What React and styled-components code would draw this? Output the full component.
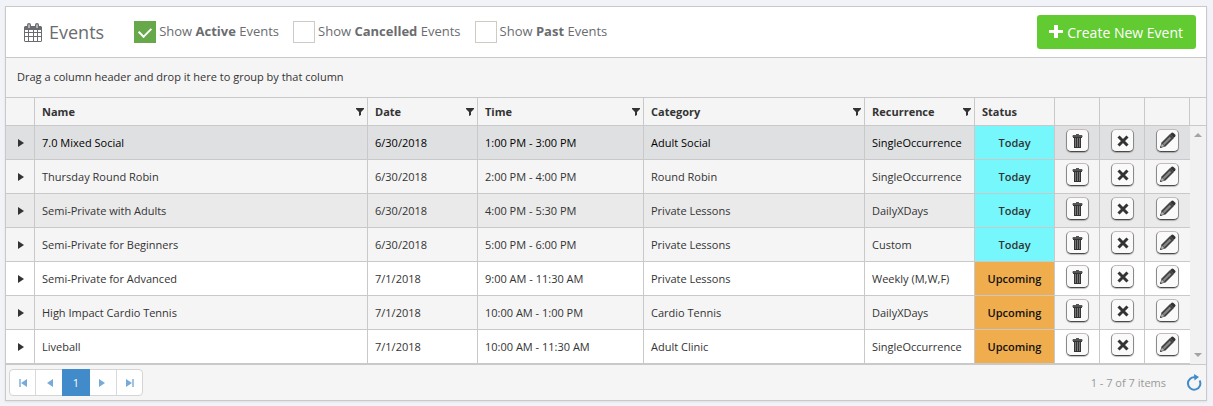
import React, { useState } from 'react';
import styled, { createGlobalStyle } from 'styled-components';

const GlobalStyle = createGlobalStyle`
  * {
    box-sizing: border-box;
  }

  body {
    margin: 0;
    background: #f1f3f8;
    font-family: 'Open Sans', 'Liberation Sans', sans-serif;
    font-size: 11px;
    color: #333;
  }

  button {
    font-family: inherit;
    cursor: pointer;
  }
`;

const Page = styled.main`
  padding: 6px 6px 5px 5px;
`;

const Panel = styled.section`
  border: 1px solid #c9c9c9;
  background: #f5f5f5;
  box-shadow: 0 1px 2px rgba(0, 0, 0, 0.08);
`;

const Toolbar = styled.header`
  display: flex;
  align-items: center;
  height: 51px;
  padding: 0 10px 0 18px;
  background: #fff;
  border-bottom: 1px solid #c9c9c9;
  color: #6a6c6f;
`;

const Title = styled.h1`
  display: flex;
  align-items: center;
  gap: 7px;
  margin: 0 30px 0 0;
  font-size: 18px;
  font-weight: 400;
  line-height: 24px;
`;

const Filters = styled.div`
  display: flex;
  flex: 1;
  gap: 14px;
`;

const FilterLabel = styled.label`
  display: flex;
  gap: 3px;
  font-size: 13px;
  line-height: 20px;
  white-space: nowrap;
`;

const Check = styled.input`
  appearance: none;
  display: grid;
  place-items: center;
  width: 22px;
  height: 22px;
  margin: 0;
  border: 1px solid #cfcbc4;
  background: #fff;

  &:checked {
    border-color: #67a84b;
    background: #67a84b;
  }

  &:checked::after {
    content: '';
    width: 6px;
    height: 10px;
    margin-bottom: 3px;
    border: solid #fff;
    border-width: 0 2px 2px 0;
    transform: rotate(45deg);
  }
`;

const CreateButton = styled.button`
  display: flex;
  align-items: center;
  gap: 4px;
  height: 34px;
  padding: 0 13px 0 12px;
  border: 0;
  border-radius: 3px;
  background: #62cb31;
  color: #fff;
  font-size: 14px;
`;

const GroupBar = styled.div`
  padding: 8px 11px 10px;
  border-bottom: 1px solid #c9c9c9;
  line-height: 21px;
`;

const HeadWrap = styled.div`
  padding-right: 16px;
  border-bottom: 1px solid #c9c9c9;
`;

const BodyWrap = styled.div`
  display: flex;
  border-bottom: 1px solid #c9c9c9;
`;

const Table = styled.table`
  width: 100%;
  table-layout: fixed;
  border-collapse: separate;
  border-spacing: 0;
`;

const Th = styled.th`
  height: 27px;
  padding: 0 3px 0 7px;
  border-right: 1px solid #c9c9c9;
  text-align: left;
  font-weight: 700;
`;

const ThInner = styled.div`
  display: flex;
  align-items: center;
  justify-content: space-between;
`;

const BareButton = styled.button`
  display: grid;
  place-items: center;
  padding: 0;
  border: 0;
  background: none;
  color: #333;
`;

const Row = styled.tr`
  background: ${({ $bg }) => $bg};
  color: ${({ $hovered }) => ($hovered ? '#000' : '#333')};
`;

const Td = styled.td`
  height: 34px;
  padding: 0 0 0 7px;
  border-right: 1px solid #c9c9c9;
  border-bottom: 1px solid #c9c9c9;
  white-space: nowrap;

  &:last-child {
    border-right: 0;
  }
`;

const ExpandCell = styled(Td)`
  padding-left: 11px;
`;

const StatusCell = styled(Td)`
  padding: 0;
  background: ${({ $status }) => ($status === 'Today' ? '#76f7fb' : '#f0ad4e')};
  color: ${({ $status }) => ($status === 'Today' ? '#333' : '#111')};
  font-weight: 600;
  text-align: center;
`;

const ActionCell = styled(Td)`
  padding: 0 0 4px 11px;
`;

const ActionButton = styled.button`
  display: grid;
  place-items: center;
  width: 23px;
  height: 23px;
  padding: 0;
  border: 1px solid;
  border-color: #c4baba #8a8a8a #4a4a4a #8a8a8a;
  border-radius: 5px;
  background: #fafafa;
  box-shadow: 0 1px 1px rgba(0, 0, 0, 0.25);
`;

const Scrollbar = styled.div`
  display: flex;
  flex: none;
  flex-direction: column;
  align-items: center;
  justify-content: space-between;
  width: 16px;
  padding: 7px 0;
  background: #f1f1f1;
`;

const Footer = styled.footer`
  display: flex;
  align-items: center;
  height: 35px;
  padding: 0 4px 0 3px;
`;

const Pager = styled.nav`
  display: flex;
  height: 27px;
  border: 1px solid #d5d5d5;
  border-radius: 4px;
  background: #fff;
`;

const PageButton = styled.button`
  display: grid;
  place-items: center;
  width: 27px;
  padding: 0;
  border: 0;
  border-right: 1px solid #d9d9d9;
  background: none;
  color: #76abd9;

  &:last-child {
    width: 25px;
    border-right: 0;
  }

  &:first-child {
    width: 26px;
  }
`;

const CurrentPage = styled(PageButton)`
  width: 28px;
  margin: -1px 0 -1px -1px;
  border-right: 0;
  background: #428bca;
  color: #fff;
  font-size: 11px;
`;

const Count = styled.span`
  margin-left: auto;
  margin-right: 20px;
  color: #999;
`;

const CalendarIcon = () => (
  <svg width="18" height="19" viewBox="0 0 18 19" aria-hidden="true">
    <path
      fill="#6a6c6f"
      fillRule="evenodd"
      d="M1 3h2V2q0-2 2-2t2 2v1h4V2q0-2 2-2t2 2v1h2l1 1v14l-1 1H1l-1-1V4zM1 7v2h3V7zm4 0v2h4V7zm5 0v2h3V7zm4 0v2h3V7zM1 10v3h3v-3zm4 0v3h4v-3zm5 0v3h3v-3zm4 0v3h3v-3zM1 14v4h3v-4zm4 0v4h4v-4zm5 0v4h3v-4zm4 0v4h3v-4zM4.500 1.500v3.500h1V1.500zm8 0v3.500h1V1.500z"
    />
  </svg>
);

const PlusIcon = () => (
  <svg width="14" height="14" viewBox="0 0 14 14" aria-hidden="true">
    <path fill="#fff" d="M5 0h4v5h5v3H9v5H5V8H0V5h5z" />
  </svg>
);

const FunnelIcon = () => (
  <svg width="8" height="8" viewBox="0 0 8 8" aria-hidden="true">
    <path fill="currentColor" d="M0 0h8v1L5 4v3L3 8V4L0 1z" />
  </svg>
);

const ExpandIcon = () => (
  <svg width="8" height="8" viewBox="0 0 8 8" aria-hidden="true">
    <path fill="currentColor" d="M1 0v8l6-4z" />
  </svg>
);

const TrashIcon = () => (
  <svg width="11" height="14" viewBox="0 0 11 14" aria-hidden="true">
    <path fill="#555" d="M4 0h3v1h3l.500 1v1H.500V2L1 1h3z" />
    <path fill="#777" d="M2 4h7v9H2z" />
    <path fill="none" stroke="#333" d="M2.500 4v9M4.500 4v9M6.500 4v9M8.500 4v9M2 13.500h7M1 3.500h9" />
  </svg>
);

const CrossIcon = () => (
  <svg width="12" height="12" viewBox="0 0 12 12" aria-hidden="true">
    <path stroke="#333" strokeWidth="3" d="M1.500 1.500l9 9M10.500 1.500l-9 9" />
  </svg>
);

const PencilIcon = () => (
  <svg width="17" height="17" viewBox="0 0 17 17" aria-hidden="true">
    <path fill="#444" d="M1 16l1.500-5.500L11 2l4 4-8.500 8.500z" />
    <path fill="#333" d="M11 2.200L12.700.700q.900-.700 1.800.200l1.600 1.600q.900.900.200 1.800L14.800 6z" />
    <path stroke="#888" strokeWidth="2" d="M4.500 12.500l7-7" />
    <path fill="#bbb" d="M1.800 14.900l1-3.200 2.700 2.500z" />
    <path fill="#444" d="M1 16l.600-2 1.400 1.400z" />
  </svg>
);

const ArrowIcon = ({ dir, edge }) => (
  <svg width="10" height="10" viewBox="0 0 10 10" aria-hidden="true">
    <g transform={dir === 'left' ? 'translate(10 0) scale(-1 1)' : undefined}>
      <path fill="currentColor" d="M1 1v8l6-4z" />
      {edge && <path fill="currentColor" opacity="0.7" d="M7 1h2v8H7z" />}
    </g>
  </svg>
);

const ScrollArrow = ({ down }) => (
  <svg width="8" height="4" viewBox="0 0 8 4" aria-hidden="true">
    <path fill="#a3a3a3" d={down ? 'M0 0h8L4 4z' : 'M0 4h8L4 0z'} />
  </svg>
);

const RefreshIcon = () => (
  <svg width="16" height="17" viewBox="0 0 16 17" aria-hidden="true">
    <path fill="none" stroke="#428bca" strokeWidth="2" d="M9 3.300A6.200 6.200 0 1 0 13.600 6.500" />
    <path fill="#428bca" d="M8 0l5 3-4.500 3.500z" />
  </svg>
);

const columns = [
  { title: 'Name', filter: true },
  { title: 'Date', filter: true, width: 110 },
  { title: 'Time', filter: true, width: 166 },
  { title: 'Category', filter: true, width: 221 },
  { title: 'Recurrence', filter: true, width: 110 },
  { title: 'Status', width: 80 },
];

const actions = [
  { label: 'Delete', Icon: TrashIcon },
  { label: 'Cancel', Icon: CrossIcon },
  { label: 'Edit', Icon: PencilIcon },
];

const events = [
  { name: '7.0 Mixed Social', date: '6/30/2018', time: '1:00 PM - 3:00 PM', category: 'Adult Social', recurrence: 'SingleOccurrence', status: 'Today', bg: '#dfe0e2', hovered: true },
  { name: 'Thursday Round Robin', date: '6/30/2018', time: '2:00 PM - 4:00 PM', category: 'Round Robin', recurrence: 'SingleOccurrence', status: 'Today', bg: '#f5f5f5' },
  { name: 'Semi-Private with Adults', date: '6/30/2018', time: '4:00 PM - 5:30 PM', category: 'Private Lessons', recurrence: 'DailyXDays', status: 'Today', bg: '#eaeaea' },
  { name: 'Semi-Private for Beginners', date: '6/30/2018', time: '5:00 PM - 6:00 PM', category: 'Private Lessons', recurrence: 'Custom', status: 'Today', bg: '#f5f5f5' },
  { name: 'Semi-Private for Advanced', date: '7/1/2018', time: '9:00 AM - 11:30 AM', category: 'Private Lessons', recurrence: 'Weekly (M,W,F)', status: 'Upcoming', bg: '#fff' },
  { name: 'High Impact Cardio Tennis', date: '7/1/2018', time: '10:00 AM - 1:00 PM', category: 'Cardio Tennis', recurrence: 'DailyXDays', status: 'Upcoming', bg: '#f5f5f5' },
  { name: 'Liveball', date: '7/1/2018', time: '10:00 AM - 11:30 AM', category: 'Adult Clinic', recurrence: 'SingleOccurrence', status: 'Upcoming', bg: '#fff' },
];

const Columns = () => (
  <colgroup>
    <col width="29" />
    {columns.map((col) => (
      <col key={col.title} width={col.width} />
    ))}
    {actions.map((action) => (
      <col key={action.label} width="45" />
    ))}
  </colgroup>
);

const App = () => {
  const [shown, setShown] = useState({ Active: true, Cancelled: false, Past: false });

  const toggle = (key) => setShown((prev) => ({ ...prev, [key]: !prev[key] }));

  return (
    <>
      <GlobalStyle />
      <Page>
        <Panel>
          <Toolbar>
            <Title>
              <CalendarIcon />
              Events
            </Title>
            <Filters>
              {Object.keys(shown).map((key) => (
                <FilterLabel key={key}>
                  <Check type="checkbox" checked={shown[key]} onChange={() => toggle(key)} />
                  <span>
                    Show <b>{key}</b> Events
                  </span>
                </FilterLabel>
              ))}
            </Filters>
            <CreateButton type="button">
              <PlusIcon />
              Create New Event
            </CreateButton>
          </Toolbar>

          <GroupBar>Drag a column header and drop it here to group by that column</GroupBar>

          <HeadWrap>
            <Table>
              <Columns />
              <thead>
                <tr>
                  <Th />
                  {columns.map((col) => (
                    <Th key={col.title} scope="col">
                      <ThInner>
                        {col.title}
                        {col.filter && (
                          <BareButton type="button" aria-label={`Filter ${col.title}`}>
                            <FunnelIcon />
                          </BareButton>
                        )}
                      </ThInner>
                    </Th>
                  ))}
                  {actions.map((action) => (
                    <Th key={action.label} aria-label={action.label} />
                  ))}
                </tr>
              </thead>
            </Table>
          </HeadWrap>

          <BodyWrap>
            <Table>
              <Columns />
              <tbody>
                {events.map((event) => (
                  <Row key={event.name} $bg={event.bg} $hovered={event.hovered}>
                    <ExpandCell>
                      <BareButton type="button" aria-label={`Expand ${event.name}`}>
                        <ExpandIcon />
                      </BareButton>
                    </ExpandCell>
                    <Td>{event.name}</Td>
                    <Td>{event.date}</Td>
                    <Td>{event.time}</Td>
                    <Td>{event.category}</Td>
                    <Td>{event.recurrence}</Td>
                    <StatusCell $status={event.status}>{event.status}</StatusCell>
                    {actions.map(({ label, Icon }) => (
                      <ActionCell key={label}>
                        <ActionButton type="button" aria-label={`${label} ${event.name}`}>
                          <Icon />
                        </ActionButton>
                      </ActionCell>
                    ))}
                  </Row>
                ))}
              </tbody>
            </Table>
            <Scrollbar>
              <ScrollArrow />
              <ScrollArrow down />
            </Scrollbar>
          </BodyWrap>

          <Footer>
            <Pager aria-label="Pages">
              <PageButton type="button" aria-label="First page">
                <ArrowIcon dir="left" edge />
              </PageButton>
              <PageButton type="button" aria-label="Previous page">
                <ArrowIcon dir="left" />
              </PageButton>
              <CurrentPage type="button" aria-current="page">
                1
              </CurrentPage>
              <PageButton type="button" aria-label="Next page">
                <ArrowIcon dir="right" />
              </PageButton>
              <PageButton type="button" aria-label="Last page">
                <ArrowIcon dir="right" edge />
              </PageButton>
            </Pager>
            <Count>1 - 7 of 7 items</Count>
            <BareButton type="button" aria-label="Refresh">
              <RefreshIcon />
            </BareButton>
          </Footer>
        </Panel>
      </Page>
    </>
  );
};

export default App;
